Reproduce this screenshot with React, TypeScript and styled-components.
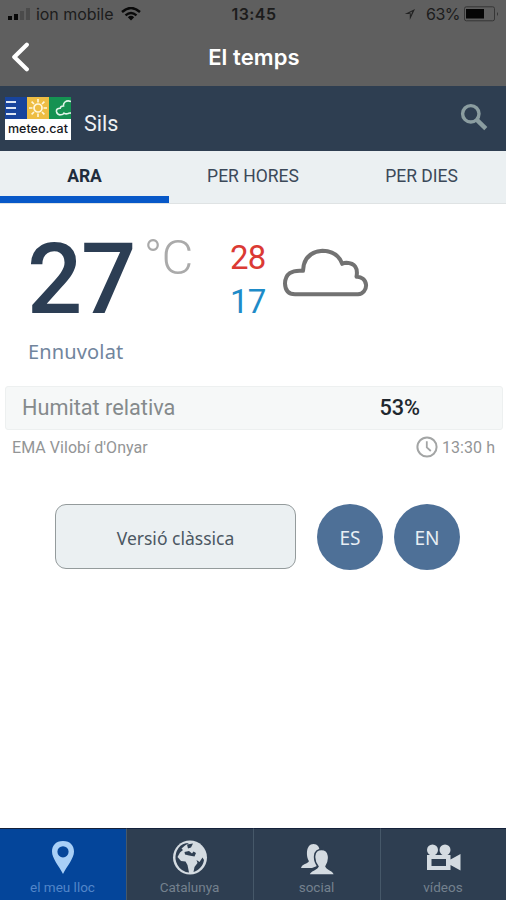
import React from "react";
import styled, { createGlobalStyle } from "styled-components";

const GlobalStyle = createGlobalStyle`
  *, *::before, *::after { box-sizing: border-box; }
  body { margin: 0; background: #fff; }
  button { border: 0; margin: 0; padding: 0; background: none; font: inherit; color: inherit; }
  svg { display: block; flex: none; }
`;

const Screen = styled.div`
  width: 506px;
  height: 900px;
  display: flex;
  flex-direction: column;
  background: #fff;
  overflow: hidden;
  font-family: Roboto, "Liberation Sans", sans-serif;
  white-space: nowrap;
`;

const NavArea = styled.header`
  height: 86px;
  background: #5f5f5f;
  font-family: Inter, "Liberation Sans", sans-serif;
`;

const StatusBar = styled.div`
  height: 28px;
  display: grid;
  grid-template-columns: 1fr auto 1fr;
  align-items: center;
  padding: 0 6px 0 8px;
  color: #1c1c1c;
  font-size: 16px;
`;

const Carrier = styled.div`
  display: flex;
  align-items: center;
  letter-spacing: -0.05px;
`;

const CarrierName = styled.span`
  margin: 0 8px 0 5px;
`;

const Clock = styled.div`
  font-weight: 600;
  letter-spacing: 0.4px;
`;

const Power = styled.div`
  display: flex;
  justify-content: flex-end;
  align-items: center;
`;

const Percent = styled.span`
  margin: 0 4px 0 10px;
  letter-spacing: -0.5px;
`;

const TitleBar = styled.div`
  height: 58px;
  display: grid;
  grid-template-columns: 60px 1fr 60px;
  align-items: center;
`;

const BackButton = styled.button`
  padding-left: 10px;
`;

const Title = styled.h1`
  margin: 0;
  padding-left: 2px;
  color: #fff;
  text-align: center;
  font-size: 22px;
  line-height: 28px;
  font-weight: 600;
  letter-spacing: 0.1px;
`;

const PlaceBar = styled.div`
  height: 65px;
  display: flex;
  align-items: center;
  padding: 0 18px 0 5px;
  background: #2e3e51;
`;

const Logo = styled.div`
  width: 66px;
  height: 43px;
  background: #fff;
`;

const LogoTiles = styled.div`
  display: flex;
  height: 22px;
`;

const LogoName = styled.div`
  height: 21px;
  text-align: center;
  color: #16181c;
  font: 500 12.5px/20px Inter, sans-serif;
  letter-spacing: 0;
`;

const Place = styled.div`
  flex: 1;
  padding: 10px 0 0 13px;
  color: #eef1f4;
  font-size: 21.5px;
  line-height: 24px;
`;

const SearchButton = styled.button`
  margin-top: -3px;
`;

const Tabs = styled.nav`
  height: 53px;
  display: grid;
  grid-template-columns: 169px 168px 169px;
  background: #ebf0f2;
  border-bottom: 1px solid #dfe3e4;
`;

const Tab = styled.button<{ $active?: boolean }>`
  height: 52px;
  border-bottom: ${(p) => (p.$active ? "7px solid #0758c8" : "7px solid transparent")};
  color: ${(p) => (p.$active ? "#202c3c" : "#3c4959")};
  font-size: 17.5px;
  font-weight: ${(p) => (p.$active ? 700 : 400)};
  padding-top: 4px;
`;

const Weather = styled.section`
  height: 182px;
  display: grid;
  grid-template-columns: 202px 54px 1fr;
  grid-template-rows: 134px 48px;
  padding-left: 27px;
`;

const Temperature = styled.div`
  display: flex;
  align-items: flex-start;
  color: #2c3e54;
`;

const Degrees = styled.span`
  padding-top: 19px;
  font-size: 97.5px;
  line-height: 114px;
  font-weight: 500;
  letter-spacing: -1.5px;
`;

const Unit = styled.span`
  padding: 25px 0 0 9px;
  color: #aaa;
  font-size: 49px;
  line-height: 57px;
  font-weight: 300;
  letter-spacing: -0.8px;
`;

const Range = styled.div`
  display: flex;
  flex-direction: column;
  padding: 32px 0 0 1px;
  font-size: 33px;
  line-height: 44px;
  letter-spacing: -0.8px;
`;

const Extreme = styled.span<{ $warm?: boolean }>`
  color: ${(p) => (p.$warm ? "#db3a34" : "#1e8bc8")};
`;

const SkyIcon = styled.div`
  padding-top: 44px;
`;

const SkyText = styled.div`
  padding: 0 0 0 1px;
  color: #71859d;
  font: 20px/27px "Noto Sans", sans-serif;
  letter-spacing: 0.15px;
`;

const Humidity = styled.div`
  height: 44px;
  margin: 0 3px 0 5px;
  padding: 0 82px 2px 16px;
  display: flex;
  align-items: center;
  justify-content: space-between;
  background: #f6f8f8;
  border: 1px solid #edf0f0;
  border-radius: 3px;
  color: #858a8c;
  font-size: 21.7px;
`;

const Value = styled.strong`
  color: #20272e;
  font-weight: 500;
`;

const Station = styled.div`
  height: 34px;
  padding: 0 11px 0 12px;
  display: flex;
  align-items: center;
  justify-content: space-between;
  color: #939596;
  font-size: 16px;
  letter-spacing: 0.05px;
`;

const Reading = styled.span`
  display: flex;
  align-items: center;
  gap: 4px;
`;

const Actions = styled.div`
  display: flex;
  align-items: center;
  padding: 40px 0 0 55px;
  font-family: "Noto Sans", sans-serif;
`;

const ClassicButton = styled.button`
  width: 241px;
  height: 65px;
  margin: -1px 21px 0 0;
  background: #ebf0f2;
  border: 1px solid #949b9c;
  border-radius: 11px;
  color: #4b5762;
  font-size: 17.5px;
  padding-top: 3px;
`;

const LanguageButton = styled.button`
  width: 66px;
  height: 66px;
  margin-right: 11px;
  padding-top: 2px;
  border-radius: 50%;
  background: #4e7097;
  color: #e8eef4;
  font-size: 19px;
`;

const BottomBar = styled.nav`
  height: 72px;
  margin-top: auto;
  display: grid;
  grid-template-columns: 126px 127px 127px 126px;
  background: #2e3e51;
`;

const BottomTab = styled.button<{ $active?: boolean }>`
  display: flex;
  flex-direction: column;
  align-items: center;
  padding: 11px 1px 0 0;
  background: ${(p) => (p.$active ? "#04459a" : "#2e3e51")};
  color: ${(p) => (p.$active ? "#5285c9" : "#74818e")};
  border-top: 1px solid #14213a;
  border-left: ${(p) => (p.$active ? "0" : "1px solid #465869")};
  font-size: 13.5px;
  line-height: 16px;
`;

const BottomLabel = styled.span`
  margin-top: 3px;
`;

const SignalIcon = () => (
  <svg width="23" height="14" viewBox="0 0 23 14">
    <path d="M0 9h4v4H0zM6 7h4v6H6z" fill="#080808" />
    <path d="M12 4h4v9h-4zM18 1h4v12h-4z" fill="#4b4b4b" />
  </svg>
);

const WifiIcon = () => (
  <svg width="20" height="14" viewBox="0 0 20 14">
    <path d="M1 5Q10-3 19 5M4.5 8.3Q10 3.5 15.500 8.3" fill="none" stroke="#0a0a0a" strokeWidth="2.4" />
    <path d="M6.8 10.2Q10 7.5 13.2 10.2L10 13.6Z" fill="#0a0a0a" />
  </svg>
);

const LocationIcon = () => (
  <svg width="12" height="13" viewBox="0 0 12 13">
    <path d="M11 1L.8 6h5v6z" fill="#222" />
    <path d="M8.2 3.5L5 5.2h1.800v2.4z" fill="#5f5f5f" />
  </svg>
);

const BatteryIcon = () => (
  <svg width="36" height="16" viewBox="0 0 36 16">
    <rect x=".5" y=".8" width="30" height="14" rx="1.8" fill="none" stroke="#363636" />
    <path d="M2 3h18v9.5H2z" fill="#050505" />
    <path d="M33 6q2 2 0 4z" fill="#333" />
  </svg>
);

const BackIcon = () => (
  <svg width="19" height="30" viewBox="0 0 19 30">
    <path d="M16.8 2.8L4.3 15l12.500 12.2" fill="none" stroke="#fff" strokeWidth="4.2" strokeLinecap="round" strokeLinejoin="round" />
  </svg>
);

const LinesTile = () => (
  <svg width="22" height="22" viewBox="0 0 22 22">
    <path d="M0 0h22v22H0z" fill="#18449c" />
    <path d="M1 5h10M1 11h10M1 17h10" stroke="#dde6f3" strokeWidth="2" />
  </svg>
);

const SunTile = () => (
  <svg width="22" height="22" viewBox="0 0 22 22">
    <path d="M0 0h22v22H0z" fill="#eebd43" />
    <circle cx="11" cy="11" r="4" fill="none" stroke="#fff7dc" strokeWidth="1.7" />
    <path d="M11 2v3.5M11 16.5V20M2 11h3.5M16.5 11H20M4.6 4.6L7 7M15 15l2.4 2.4M4.6 17.4L7 15M15 7l2.4-2.4" stroke="#fff7dc" strokeWidth="1.6" />
  </svg>
);

const CloudTile = () => (
  <svg width="22" height="22" viewBox="0 0 22 22">
    <path d="M0 0h22v22H0z" fill="#159252" />
    <path d="M22 4.5q-3.500-1.500-6 .5-1.800 1.500-1.500 4-3-.2-3.300 2.200-4.200.2-3.700 3.500Q8.200 18.200 11.500 17.800q2.500.2 3.500-1.600 2 1.200 4 .3 1.500-.8 3-.3" fill="none" stroke="#e1f5e9" strokeWidth="1.6" />
  </svg>
);

const SearchIcon = () => (
  <svg width="28" height="28" viewBox="0 0 28 28">
    <circle cx="10.8" cy="10.8" r="8.2" fill="none" stroke="#8b9da0" strokeWidth="3.4" />
    <path d="M16.6 16.6l9.2 9" stroke="#8b9da0" strokeWidth="4.4" />
  </svg>
);

const CloudIcon = () => (
  <svg width="88" height="50" viewBox="0 0 88 50">
    <path d="M12 46.300H75A8.800 8.800 0 0 0 73.500 28.700Q76 15.500 63.500 14.800Q61.200 14.800 59.200 15.800Q54.500 3 39.500 2.700Q20.700 4.300 20 22.800Q2.500 21.200 2 35.500Q2.300 46.300 12 46.300Z" fill="none" stroke="#727272" strokeWidth="4" strokeLinejoin="round" />
  </svg>
);

const ClockIcon = () => (
  <svg width="22" height="22" viewBox="0 0 22 22">
    <circle cx="11" cy="11" r="9.6" fill="none" stroke="#a3a5a5" strokeWidth="2" />
    <path d="M10.8 5.2v6.2l4 3.600" fill="none" stroke="#a3a5a5" strokeWidth="1.8" />
  </svg>
);

const PinIcon = () => (
  <svg width="36" height="36" viewBox="0 0 36 36">
    <path d="M18 1C10.5 1 7 6 7 11.5C7 18.5 14 26 18 34C22 26 29 18.5 29 11.5C29 6 25.5 1 18 1Zm0 5.2a5.6 5.6 0 1 1 0 11.2a5.6 5.6 0 0 1 0-11.2Z" fill="#a8cff7" fillRule="evenodd" />
  </svg>
);

const GlobeIcon = () => (
  <svg width="36" height="36" viewBox="0 0 36 36">
    <circle cx="18" cy="17.500" r="17" fill="#d4dbe1" />
    <path d="M17 3Q10 3 6.500 8Q3 13 3.500 19Q4.500 26 10 30Q14 32.500 17 32.500L15.500 25L13.500 21.500L9 21L5.500 17L8 12.500L11 10L9.500 8.500L13 5.500Z" fill="#2e3e51" />
    <path d="M15 4.500L21 3.500L19 7.500L16 8.500ZM12.500 12L17 11L20 13.500L21.500 11.500L24 13L22.500 16.500L17 15.500L13 14.500Z" fill="#2e3e51" />
    <path d="M24.500 20L27.500 22L30.500 17.500L32 20C31 26 27 30 21.500 32L22.500 27L25.500 23Z" fill="#2e3e51" />
  </svg>
);

const PeopleIcon = () => (
  <svg width="36" height="36" viewBox="0 0 36 36">
    <path d="M2 28c.7-4 7-4.2 8-7C7 17 6.500 4 14.500 4c4 0 6 3 6 7L18 26l-5 2Z" fill="#d4dbe1" />
    <path d="M10 35c0-5 8-5 9-8.500C14 20 14 9.500 22.500 9.500S31 20 27 26.500C28 30 35.500 30 35.500 35Z" fill="#d4dbe1" stroke="#2e3e51" strokeWidth="1.500" />
  </svg>
);

const CameraIcon = () => (
  <svg width="36" height="36" viewBox="0 0 36 36">
    <circle cx="7.500" cy="10" r="5.500" fill="#d4dbe1" />
    <circle cx="20" cy="10" r="5.500" fill="#d4dbe1" />
    <path d="M2 15h23.500v4.500L35.500 14v16.500L25.500 25v5H2ZM6.500 19v7H21v-7Z" fill="#d4dbe1" fillRule="evenodd" />
  </svg>
);

const bottomTabs = [
  { label: "el meu lloc", Icon: PinIcon },
  { label: "Catalunya", Icon: GlobeIcon },
  { label: "social", Icon: PeopleIcon },
  { label: "vídeos", Icon: CameraIcon },
];

export default function App() {
  return (
    <Screen>
      <GlobalStyle />
      <NavArea>
        <StatusBar>
          <Carrier><SignalIcon /><CarrierName>ion mobile</CarrierName><WifiIcon /></Carrier>
          <Clock>13:45</Clock>
          <Power><LocationIcon /><Percent>63%</Percent><BatteryIcon /></Power>
        </StatusBar>
        <TitleBar>
          <BackButton aria-label="Enrere"><BackIcon /></BackButton>
          <Title>El temps</Title>
        </TitleBar>
      </NavArea>
      <PlaceBar>
        <Logo>
          <LogoTiles><LinesTile /><SunTile /><CloudTile /></LogoTiles>
          <LogoName>meteo.cat</LogoName>
        </Logo>
        <Place>Sils</Place>
        <SearchButton aria-label="Cerca"><SearchIcon /></SearchButton>
      </PlaceBar>
      <Tabs>
        <Tab $active>ARA</Tab>
        <Tab>PER HORES</Tab>
        <Tab>PER DIES</Tab>
      </Tabs>
      <Weather>
        <Temperature><Degrees>27</Degrees><Unit>°C</Unit></Temperature>
        <Range><Extreme $warm>28</Extreme><Extreme>17</Extreme></Range>
        <SkyIcon><CloudIcon /></SkyIcon>
        <SkyText>Ennuvolat</SkyText>
      </Weather>
      <Humidity><span>Humitat relativa</span><Value>53%</Value></Humidity>
      <Station>
        <span>EMA Vilobí d'Onyar</span>
        <Reading><ClockIcon />13:30 h</Reading>
      </Station>
      <Actions>
        <ClassicButton>Versió clàssica</ClassicButton>
        <LanguageButton>ES</LanguageButton>
        <LanguageButton>EN</LanguageButton>
      </Actions>
      <BottomBar>
        {bottomTabs.map(({ label, Icon }, i) => (
          <BottomTab key={label} $active={i === 0}>
            <Icon />
            <BottomLabel>{label}</BottomLabel>
          </BottomTab>
        ))}
      </BottomBar>
    </Screen>
  );
}
